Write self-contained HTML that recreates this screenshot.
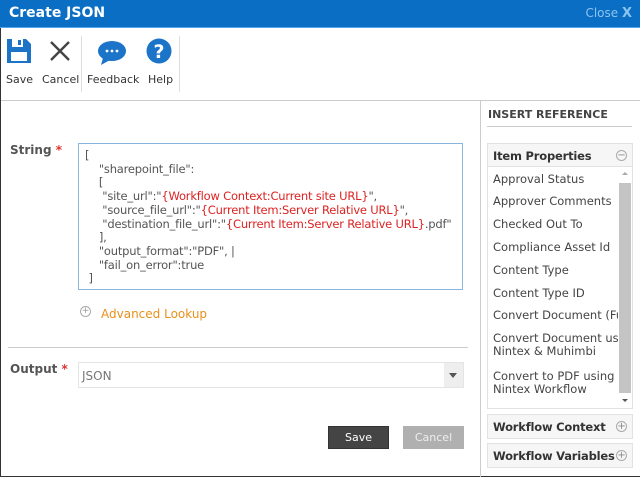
<!DOCTYPE html>
<html><head><meta charset="utf-8"><style>
*{box-sizing:border-box;margin:0;padding:0}
body{width:640px;height:477px;overflow:hidden;background:#fff;font-family:"DejaVu Sans","Liberation Sans",sans-serif;position:relative;color:#444}
.abs{position:absolute}
#title{left:0;top:0;width:640px;height:28px;background:#0a6ec4;border-bottom:1px solid #5aa6e6}
#title b{position:absolute;left:9px;top:5px;color:#fff;font-size:14px;font-family:"DejaVu Sans",sans-serif}
#close{position:absolute;right:8px;top:6px;color:#8cc4f0;font-size:12px}
.tb{font-size:11px;color:#333;top:73px}
.sep{background:#ddd;width:1px;top:36px;height:56px}
.lbl{font-size:12px;font-weight:bold;color:#555}
.req{color:#d33}
#ta{left:78px;top:143px;width:385px;height:147px;border:1px solid #8ab4de;font-size:11.5px;letter-spacing:-0.2px;line-height:13.7px;color:#555;padding:5px 0 0 6px;white-space:pre}
.r{color:#d22}
.item{left:493px;font-size:11.5px;color:#444;line-height:13px}
.hdr{border:1px solid #e2e2e2;background:#f6f6f6;font-weight:bold;font-size:11.5px;letter-spacing:-0.2px;color:#333;padding:5px 0 0 5px}
.pl{position:absolute;right:5px;top:6px;width:11px;height:11px;border:1px solid #aaa;border-radius:50%;font-size:10px;line-height:9px;text-align:center;color:#888;font-weight:normal;background:#f6f6f6}
</style></head><body>
<div id="title" class="abs"><b>Create JSON</b><span id="close">Close <b style="position:static;color:#8cc4f0;font-size:13px">X</b></span></div>
<svg class="abs" style="left:6px;top:38px" width="26" height="26" viewBox="0 0 26 26"><path d="M1 1h19l5 5v19H1z" fill="#1b74c8"/><rect x="6" y="1" width="11" height="8" fill="#fff"/><rect x="12" y="2" width="3" height="5" fill="#1b74c8"/><rect x="5" y="14" width="16" height="9" fill="#fff"/></svg>
<svg class="abs" style="left:49px;top:40px" width="22" height="22"><path d="M2 2L20 20M20 2L2 20" stroke="#444" stroke-width="2.4"/></svg>
<svg class="abs" style="left:97px;top:40px" width="30" height="26"><ellipse cx="15" cy="11" rx="14" ry="10" fill="#1b74c8"/><path d="M6 18L4 25L13 20z" fill="#1b74c8"/><circle cx="10" cy="11" r="1.4" fill="#fff"/><circle cx="15" cy="11" r="1.4" fill="#fff"/><circle cx="20" cy="11" r="1.4" fill="#fff"/></svg>
<svg class="abs" style="left:146px;top:38px" width="26" height="26"><circle cx="13" cy="13" r="12.5" fill="#1b74c8"/><text x="13" y="20" fill="#fff" font-size="19" font-weight="bold" text-anchor="middle" font-family="DejaVu Sans">?</text></svg>
<div class="abs tb" style="left:6px">Save</div>
<div class="abs tb" style="left:42px">Cancel</div>
<div class="abs tb" style="left:87px">Feedback</div>
<div class="abs tb" style="left:148px">Help</div>
<div class="abs sep" style="left:81px"></div>
<div class="abs sep" style="left:179px"></div>
<div class="abs" style="left:0;top:100px;width:640px;height:1px;background:#ccc"></div>
<div class="abs" style="left:0;top:28px;width:1px;height:449px;background:#333"></div>
<div class="abs" style="left:0;top:476px;width:640px;height:1px;background:#333"></div>
<div class="abs lbl" style="left:10px;top:143px">String <span class="req">*</span></div>
<div id="ta" class="abs">[
    "sharepoint_file":
    [
     "site_url":"<span class="r">{Workflow Context:Current site URL}</span>",
     "source_file_url":"<span class="r">{Current Item:Server Relative URL}</span>",
     "destination_file_url":"<span class="r">{Current Item:Server Relative URL}</span>.pdf"
    ],
    "output_format":"PDF", |
    "fail_on_error":true
 ]</div>
<div class="abs" style="left:80px;top:306px;width:11px;height:11px;border:1px solid #aaa;border-radius:50%;font-size:9px;line-height:9px;text-align:center;color:#999">+</div>
<div class="abs" style="left:101px;top:307px;font-size:12px;color:#e8901c">Advanced Lookup</div>
<div class="abs" style="left:8px;top:347px;width:460px;height:1px;background:#ccc"></div>
<div class="abs lbl" style="left:10px;top:362px">Output <span class="req">*</span></div>
<div class="abs" style="left:78px;top:362px;width:386px;height:26px;border:1px solid #e4e4e4;font-size:12px;color:#777;padding:6px 0 0 3px">JSON</div>
<div class="abs" style="left:444px;top:363px;width:19px;height:24px;background:#eee"></div>
<div class="abs" style="left:449px;top:373px;width:0;height:0;border-left:4px solid transparent;border-right:4px solid transparent;border-top:5px solid #555"></div>
<div class="abs" style="left:328px;top:426px;width:61px;height:23px;background:#444;border:1px solid #333;color:#fff;font-size:11px;text-align:center;line-height:21px">Save</div>
<div class="abs" style="left:403px;top:426px;width:61px;height:23px;background:#b0b0b0;color:#eee;font-size:11px;text-align:center;line-height:23px">Cancel</div>
<div class="abs" style="left:480px;top:101px;width:1px;height:376px;background:#ccc"></div>
<div class="abs" style="left:488px;top:108px;font-size:11px;font-weight:bold;color:#444">INSERT REFERENCE</div>
<div class="abs" style="left:487px;top:126px;width:145px;height:1px;background:#ccc"></div>
<div class="abs hdr" style="left:487px;top:143px;width:146px;height:24px">Item Properties<span class="pl">−</span></div>
<div class="abs" style="left:487px;top:167px;width:146px;height:242px;border:1px solid #e2e2e2;border-top:none"></div>
<div class="abs" style="left:619px;top:183px;width:12px;height:210px;background:#c4c4c4"></div>
<div class="abs" style="left:622px;top:172px;border-left:3px solid transparent;border-right:3px solid transparent;border-bottom:3px solid #aaa"></div>
<div class="abs" style="left:622px;top:399px;border-left:3px solid transparent;border-right:3px solid transparent;border-top:3px solid #555"></div>
<div class="abs item" style="top:173px">Approval Status</div>
<div class="abs item" style="top:195px">Approver Comments</div>
<div class="abs item" style="top:218px">Checked Out To</div>
<div class="abs item" style="top:241px">Compliance Asset Id</div>
<div class="abs item" style="top:264px">Content Type</div>
<div class="abs item" style="top:287px">Content Type ID</div>
<div class="abs item" style="top:309px;width:125px;overflow:hidden;white-space:nowrap">Convert Document (Full</div>
<div class="abs item" style="top:332px;width:125px;overflow:hidden;white-space:nowrap">Convert Document using<br>Nintex &amp; Muhimbi</div>
<div class="abs item" style="top:370px">Convert to PDF using<br>Nintex Workflow</div>
<div class="abs hdr" style="left:487px;top:414px;width:146px;height:25px;overflow:hidden;white-space:nowrap">Workflow Context<span class="pl">+</span></div>
<div class="abs hdr" style="left:487px;top:443px;width:146px;height:25px;overflow:hidden;white-space:nowrap">Workflow Variables<span class="pl">+</span></div>
</body></html>
